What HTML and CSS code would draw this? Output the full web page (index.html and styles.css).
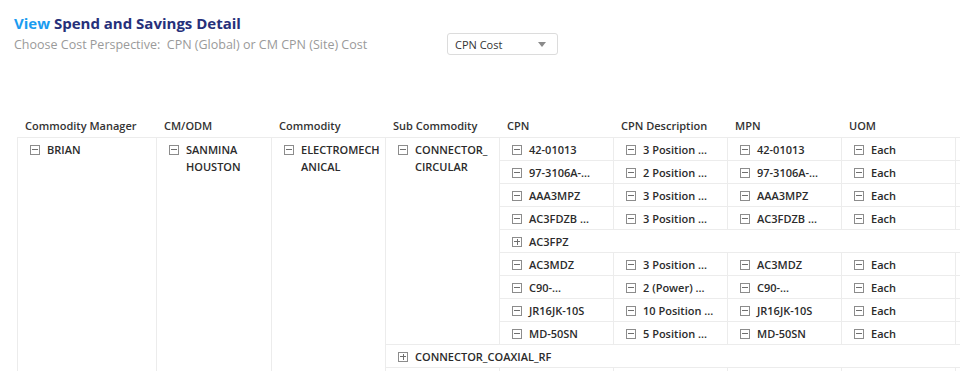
FILE: index.html
```html
<!DOCTYPE html>
<html lang="en">
<head>
    <meta charset="UTF-8">
    <meta name="viewport" content="width=device-width, initial-scale=1.0">
    <title>Spend and Savings Detail</title>
    <link rel="stylesheet" href="styles.css">
</head>
<body>
    <div class="page">
        <h1 class="title"><span class="view">View</span> Spend and Savings Detail</h1>

        <div class="perspective">
            <span class="hint">Choose Cost Perspective:&nbsp; CPN (Global) or CM CPN (Site) Cost</span>
            <div class="select">
                <span>CPN Cost</span>
                <span class="caret"></span>
            </div>
        </div>

        <div class="pivot">
            <!-- Column headers -->
            <div class="head">
                <div class="hcell w-mgr">Commodity Manager</div>
                <div class="hcell w-cm">CM/ODM</div>
                <div class="hcell">Commodity</div>
                <div class="hcell">Sub Commodity</div>
                <div class="hcell">CPN</div>
                <div class="hcell">CPN Description</div>
                <div class="hcell">MPN</div>
                <div class="hcell">UOM</div>
            </div>

            <!-- Tree body -->
            <div class="body">
                <div class="node">
                    <div class="cell w-mgr"><i class="tog"></i><span>BRIAN</span></div>
                    <div class="kids">
                        <div class="node">
                            <div class="cell w-cm"><i class="tog"></i><span>SANMINA HOUSTON</span></div>
                            <div class="kids">
                                <div class="node">
                                    <div class="cell"><i class="tog"></i><span>ELECTROMECH<wbr>ANICAL</span></div>
                                    <div class="kids">
                                        <div class="node">
                                            <div class="cell"><i class="tog"></i><span>CONNECTOR_<wbr>CIRCULAR</span></div>
                                            <div class="kids">
                                                <div class="row">
                                                    <div class="cell"><i class="tog"></i><span>42-01013</span></div>
                                                    <div class="cell"><i class="tog"></i><span>3 Position ...</span></div>
                                                    <div class="cell"><i class="tog"></i><span>42-01013</span></div>
                                                    <div class="cell"><i class="tog"></i><span>Each</span></div>
                                                    <div class="cell"></div>
                                                </div>
                                                <div class="row">
                                                    <div class="cell"><i class="tog"></i><span>97-3106A-...</span></div>
                                                    <div class="cell"><i class="tog"></i><span>2 Position ...</span></div>
                                                    <div class="cell"><i class="tog"></i><span>97-3106A-...</span></div>
                                                    <div class="cell"><i class="tog"></i><span>Each</span></div>
                                                    <div class="cell"></div>
                                                </div>
                                                <div class="row">
                                                    <div class="cell"><i class="tog"></i><span>AAA3MPZ</span></div>
                                                    <div class="cell"><i class="tog"></i><span>3 Position ...</span></div>
                                                    <div class="cell"><i class="tog"></i><span>AAA3MPZ</span></div>
                                                    <div class="cell"><i class="tog"></i><span>Each</span></div>
                                                    <div class="cell"></div>
                                                </div>
                                                <div class="row">
                                                    <div class="cell"><i class="tog"></i><span>AC3FDZB ...</span></div>
                                                    <div class="cell"><i class="tog"></i><span>3 Position ...</span></div>
                                                    <div class="cell"><i class="tog"></i><span>AC3FDZB ...</span></div>
                                                    <div class="cell"><i class="tog"></i><span>Each</span></div>
                                                    <div class="cell"></div>
                                                </div>
                                                <div class="row">
                                                    <div class="cell wide"><i class="tog plus"></i><span>AC3FPZ</span></div>
                                                </div>
                                                <div class="row">
                                                    <div class="cell"><i class="tog"></i><span>AC3MDZ</span></div>
                                                    <div class="cell"><i class="tog"></i><span>3 Position ...</span></div>
                                                    <div class="cell"><i class="tog"></i><span>AC3MDZ</span></div>
                                                    <div class="cell"><i class="tog"></i><span>Each</span></div>
                                                    <div class="cell"></div>
                                                </div>
                                                <div class="row">
                                                    <div class="cell"><i class="tog"></i><span>C90-...</span></div>
                                                    <div class="cell"><i class="tog"></i><span>2 (Power) ...</span></div>
                                                    <div class="cell"><i class="tog"></i><span>C90-...</span></div>
                                                    <div class="cell"><i class="tog"></i><span>Each</span></div>
                                                    <div class="cell"></div>
                                                </div>
                                                <div class="row">
                                                    <div class="cell"><i class="tog"></i><span>JR16JK-10S</span></div>
                                                    <div class="cell"><i class="tog"></i><span>10 Position ...</span></div>
                                                    <div class="cell"><i class="tog"></i><span>JR16JK-10S</span></div>
                                                    <div class="cell"><i class="tog"></i><span>Each</span></div>
                                                    <div class="cell"></div>
                                                </div>
                                                <div class="row">
                                                    <div class="cell"><i class="tog"></i><span>MD-50SN</span></div>
                                                    <div class="cell"><i class="tog"></i><span>5 Position ...</span></div>
                                                    <div class="cell"><i class="tog"></i><span>MD-50SN</span></div>
                                                    <div class="cell"><i class="tog"></i><span>Each</span></div>
                                                    <div class="cell"></div>
                                                </div>
                                            </div>
                                        </div>

                                        <div class="row">
                                            <div class="cell wide"><i class="tog plus"></i><span>CONNECTOR_COAXIAL_RF</span></div>
                                        </div>

                                        <div class="node">
                                            <div class="cell"></div>
                                            <div class="kids">
                                                <div class="row">
                                                    <div class="cell"></div>
                                                    <div class="cell"></div>
                                                    <div class="cell"></div>
                                                    <div class="cell"></div>
                                                    <div class="cell"></div>
                                                </div>
                                            </div>
                                        </div>
                                    </div>
                                </div>
                            </div>
                        </div>
                    </div>
                </div>
            </div>
        </div>
    </div>
</body>
</html>
```

FILE: styles.css
```css
/* General Page Styling */
body {
    margin: 0;
    padding: 0;
    background: #ffffff;
    font-family: 'Open Sans', 'Liberation Sans', sans-serif;
    color: #2b2b2b;
    overflow: hidden;
}

.page {
    padding: 14px 0 0 14px;
    height: 357px;
    overflow: hidden;
}

/* Title */
.title {
    margin: 0;
    font-size: 15px;
    line-height: 19px;
    font-weight: 700;
    color: #26307a;
}

.view {
    color: #1a9cf0;
}

/* Cost perspective picker */
.perspective {
    display: flex;
    align-items: center;
    height: 22px;
}

.hint {
    width: 433px;
    flex: none;
    font-size: 12.5px;
    color: #9a9a9a;
}

.select {
    width: 111px;
    height: 22px;
    box-sizing: border-box;
    border: 1px solid #dcdcdc;
    border-radius: 3px;
    display: flex;
    align-items: center;
    justify-content: space-between;
    padding: 0 11px 0 7px;
    font-size: 11px;
    color: #333;
}

.caret {
    width: 0;
    height: 0;
    border-left: 4px solid transparent;
    border-right: 4px solid transparent;
    border-top: 5px solid #8a8a8a;
}

/* Pivot table */
.pivot {
    margin: 58px 0 0 3px;
    width: max-content;
    font-size: 11px;
    font-weight: 600;
}

.head {
    display: flex;
    height: 24px;
    align-items: center;
}

.hcell {
    width: 114px;
    box-sizing: border-box;
    padding-left: 8px;
    color: #333;
}

.body {
    border-top: 1px solid #ececec;
}

.node,
.row {
    display: flex;
}

.kids {
    display: flex;
    flex-direction: column;
}

.kids > * + * {
    border-top: 1px solid #ececec;
}

.cell {
    width: 114px;
    flex: none;
    box-sizing: border-box;
    border-left: 1px solid #ececec;
    padding: 3px 6px 2px 12px;
    min-height: 22px;
    line-height: 17px;
    display: flex;
    align-items: flex-start;
    color: #2b2b2b;
}

.cell span {
    margin-left: 7px;
}

.w-mgr {
    width: 139px;
}

.w-cm {
    width: 115px;
}

.cell.wide {
    flex: 1;
    width: auto;
}

/* Expand / collapse toggles */
.tog {
    position: relative;
    flex: none;
    width: 10px;
    height: 10px;
    box-sizing: border-box;
    border: 1px solid #8c8c8c;
    margin-top: 4px;
}

.tog::before {
    content: "";
    position: absolute;
    left: 1px;
    top: 3px;
    width: 6px;
    height: 1px;
    background: #6f6f6f;
}

.tog.plus::after {
    content: "";
    position: absolute;
    left: 3.5px;
    top: 1px;
    width: 1px;
    height: 6px;
    background: #6f6f6f;
}
```
